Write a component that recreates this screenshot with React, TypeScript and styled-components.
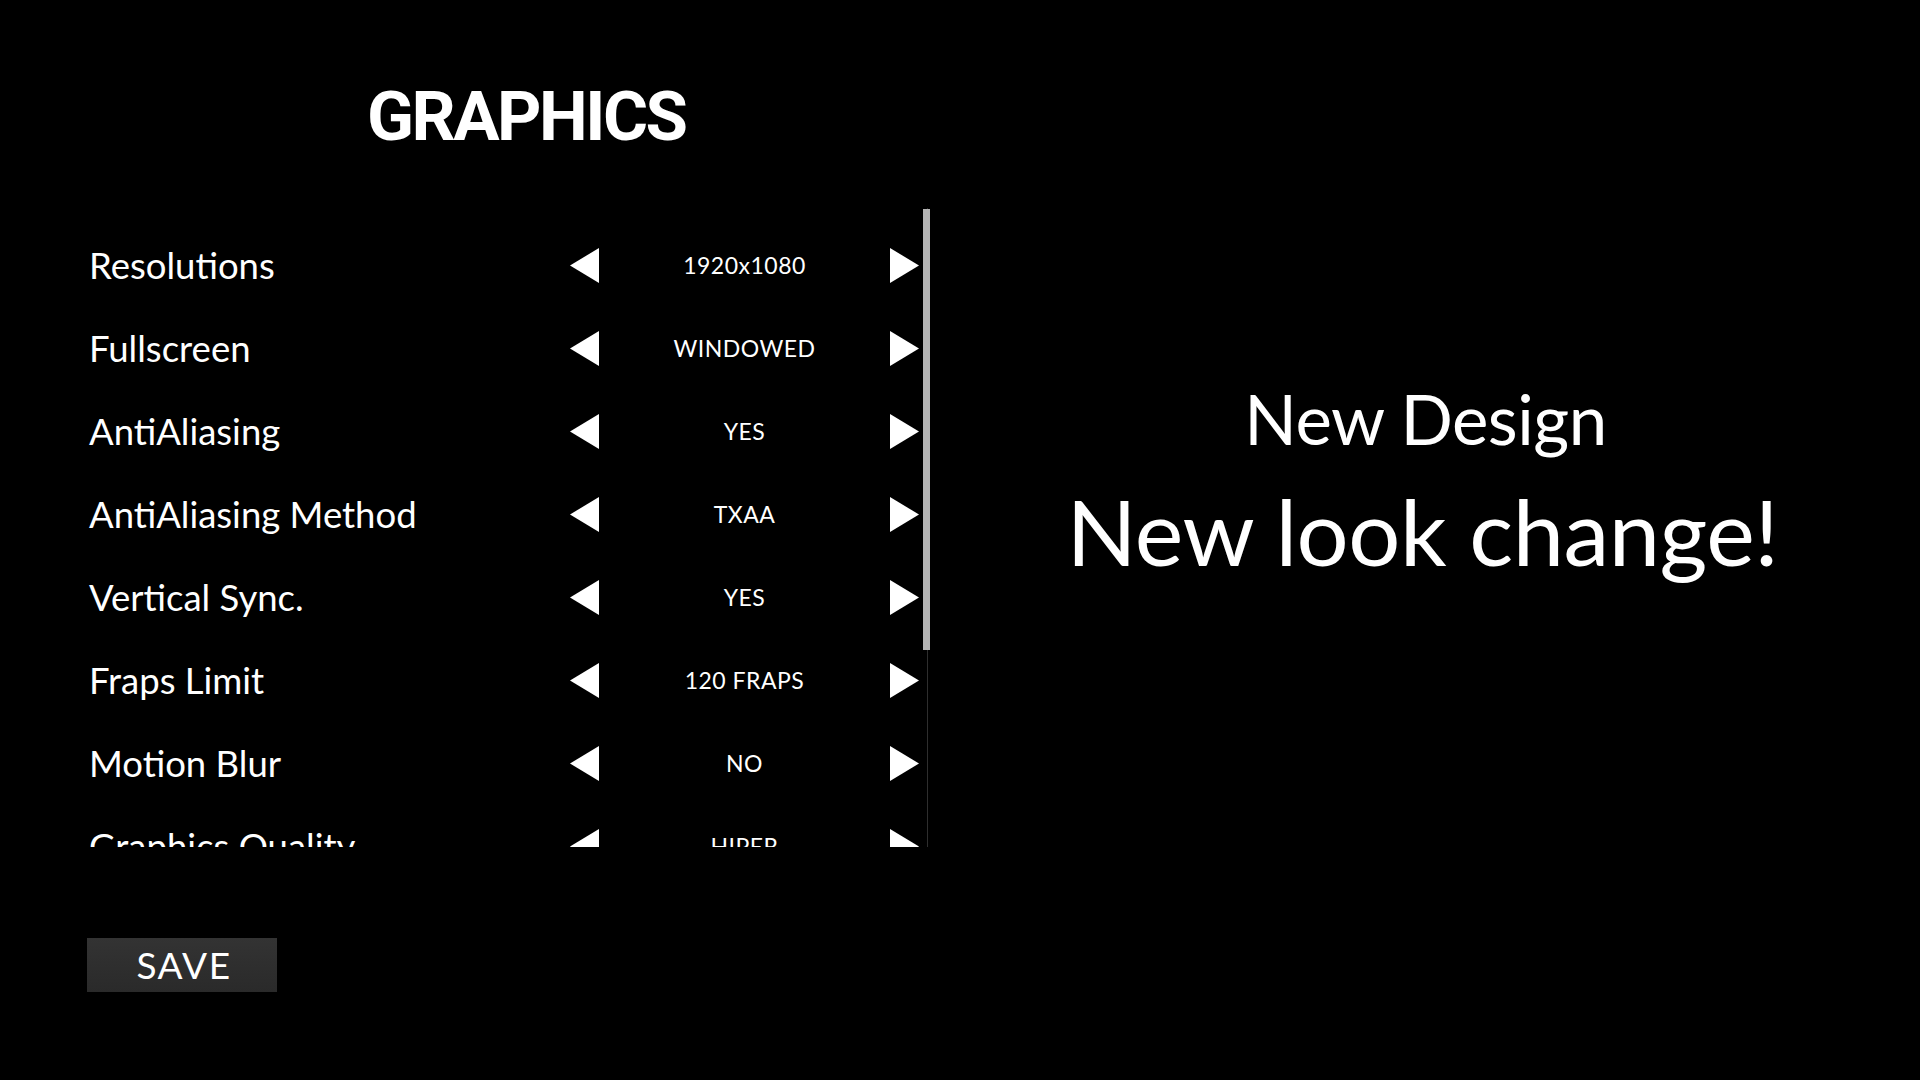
import React from "react";
import styled, { createGlobalStyle } from "styled-components";

const Global = createGlobalStyle`
  html, body { margin: 0; padding: 0; background: #000; }
  body { width: 1920px; height: 1080px; overflow: hidden; }
`;

const Page = styled.div`
  width: 1920px;
  height: 1080px;
  background: #000;
  color: #fff;
  display: flex;
  flex-direction: row;
`;

const LeftColumn = styled.div`
  width: 931px;
  display: flex;
  flex-direction: column;
`;

const Title = styled.h1`
  margin: 0;
  padding: 75px 0 49px 367px;
  font-family: Roboto, "Liberation Sans", sans-serif;
  font-weight: 700;
  font-size: 69px;
  line-height: 84px;
  letter-spacing: -2.5px;
`;

const ListArea = styled.div`
  height: 639px;
  display: flex;
  flex-direction: row;
`;

const Rows = styled.div`
  width: 923px;
  padding: 16px 0 0 89px;
  box-sizing: border-box;
  overflow: hidden;
`;

const Row = styled.div`
  height: 83px;
  display: grid;
  grid-template-columns: 481px 29px 291px 29px;
  align-items: center;
`;

const Label = styled.div`
  font-family: Lato, "Open Sans", sans-serif;
  font-size: 36.5px;
  line-height: 1;
  white-space: nowrap;
`;

const Value = styled.div`
  font-family: Lato, "Open Sans", sans-serif;
  font-size: 23px;
  text-align: center;
  line-height: 1;
  letter-spacing: 0.5px;
`;

const ArrowSvg = styled.svg`
  display: block;
  width: 29px;
  height: 35px;
`;

const Scroll = styled.div`
  width: 8px;
  position: relative;
`;

const Track = styled.div`
  position: absolute;
  left: 4px;
  top: 0;
  bottom: 0;
  width: 1px;
  background: #2e2e2e;
`;

const Thumb = styled.div`
  position: absolute;
  left: 0;
  top: 1px;
  width: 7px;
  height: 441px;
  background: #b4b4b4;
`;

const Footer = styled.div`
  padding: 91px 0 0 87px;
`;

const SaveButton = styled.button`
  width: 190px;
  height: 54px;
  border: none;
  background: linear-gradient(#333333, #2a2a2a);
  color: #fff;
  font-family: Lato, "Open Sans", sans-serif;
  font-size: 37px;
  letter-spacing: 1.5px;
  padding: 0 0 0 4px;
  cursor: pointer;
  line-height: 54px;
`;

const RightColumn = styled.div`
  flex: 1;
  display: flex;
  flex-direction: column;
  align-items: center;
  padding-top: 376px;
  font-family: Lato, "Open Sans", sans-serif;
`;

const Subtitle = styled.div`
  font-size: 69px;
  line-height: 86px;
  letter-spacing: -0.5px;
`;

const Headline = styled.div`
  font-size: 92px;
  line-height: 114px;
  letter-spacing: -0.5px;
  margin-top: 12px;
  margin-left: -6px;
`;

const Arrow = ({ dir }: { dir: "left" | "right" }) => (
  <ArrowSvg viewBox="0 0 29 35">
    {dir === "left" ? (
      <polygon points="29,0 29,35 0,17.5" fill="#fff" />
    ) : (
      <polygon points="0,0 0,35 29,17.5" fill="#fff" />
    )}
  </ArrowSvg>
);

const settings: [string, string][] = [
  ["Resolutions", "1920x1080"],
  ["Fullscreen", "WINDOWED"],
  ["AntiAliasing", "YES"],
  ["AntiAliasing Method", "TXAA"],
  ["Vertical Sync.", "YES"],
  ["Fraps Limit", "120 FRAPS"],
  ["Motion Blur", "NO"],
  ["Graphics Quality", "HIPER"],
  ["Shadows", "HIGH"],
  ["Textures", "HIGH"],
];

export default function App() {
  return (
    <>
      <Global />
      <Page>
        <LeftColumn>
          <Title>GRAPHICS</Title>
          <ListArea>
            <Rows>
              {settings.map(([label, value]) => (
                <Row key={label}>
                  <Label>{label}</Label>
                  <Arrow dir="left" />
                  <Value>{value}</Value>
                  <Arrow dir="right" />
                </Row>
              ))}
            </Rows>
            <Scroll>
              <Track />
              <Thumb />
            </Scroll>
          </ListArea>
          <Footer>
            <SaveButton>SAVE</SaveButton>
          </Footer>
        </LeftColumn>
        <RightColumn>
          <Subtitle>New Design</Subtitle>
          <Headline>New look change!</Headline>
        </RightColumn>
      </Page>
    </>
  );
}
